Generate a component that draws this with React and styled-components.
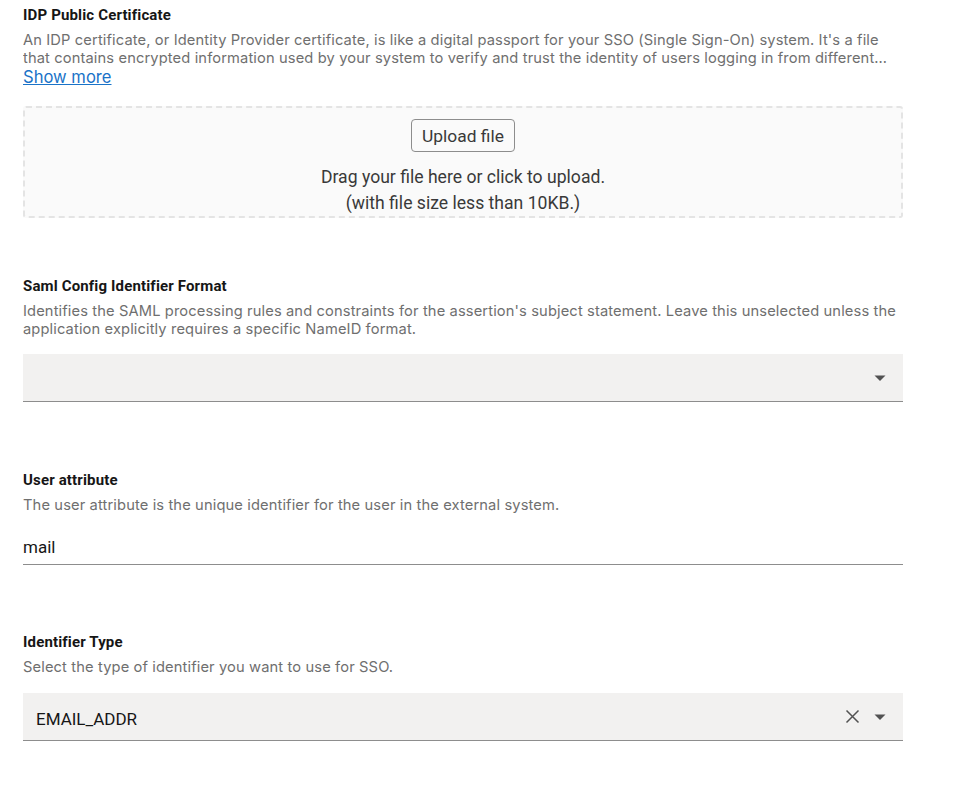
import React from "react";
import styled, { createGlobalStyle } from "styled-components";

const Global = createGlobalStyle`
  html, body { margin: 0; padding: 0; background: #ffffff; }
  body { font-family: Roboto, "Noto Sans", sans-serif; color: #161616; }
  * { box-sizing: border-box; }
`;

const Page = styled.div`
  width: 880px;
  margin-left: 23px;
  padding-top: 6px;
  display: flex;
  flex-direction: column;
`;

const Field = styled.section`
  display: flex;
  flex-direction: column;
  margin-bottom: ${(p) => p.$gap || 0}px;
`;

const Label = styled.div`
  font-family: Roboto, sans-serif;
  font-weight: 700;
  font-size: 15px;
  letter-spacing: 0.15px;
  line-height: 18px;
  color: #161616;
  margin-bottom: 7px;
`;

const Help = styled.div`
  font-family: Inter, "Noto Sans", sans-serif;
  font-size: 14.7px;
  line-height: 18px;
  color: #6f6f6f;
  letter-spacing: 0.12px;
`;

const Clamp = styled(Help)`
  display: -webkit-box;
  -webkit-line-clamp: 2;
  -webkit-box-orient: vertical;
  overflow: hidden;
`;

const MoreLink = styled.a`
  font-family: Inter, sans-serif;
  font-size: 16.6px;
  line-height: 20px;
  color: #1a73c8;
  text-decoration: underline;
  cursor: pointer;
  align-self: flex-start;
`;

const Drop = styled.div`
  margin-top: 19px;
  height: 112px;
  border: 2px dashed #e4e4e4;
  border-radius: 3px;
  background: #fafafa;
  display: flex;
  flex-direction: column;
  align-items: center;
  padding-top: 11px;
`;

const UploadButton = styled.button`
  height: 34px;
  padding: 0 10px;
  border: 1px solid #8d8d8d;
  border-radius: 4px;
  background: #fafafa;
  font-family: Roboto, sans-serif;
  font-size: 17.4px;
  color: #393939;
  cursor: pointer;
`;

const DropText = styled.div`
  margin-top: 12px;
  font-family: Roboto, sans-serif;
  font-size: 17.6px;
  line-height: 26px;
  color: #393939;
  text-align: center;
`;

const Select = styled.div`
  margin-top: ${(p) => p.$top}px;
  height: 48px;
  background: #f2f1f0;
  border-bottom: 1px solid #8d8d8d;
  display: flex;
  align-items: center;
  padding: 0 16px 0 13px;
  gap: 13px;
`;

const Value = styled.div`
  flex: 1;
  font-family: Roboto, sans-serif;
  font-size: 17px;
  color: #161616;
  padding-top: 5px;
`;

const Input = styled.div`
  margin-top: 21px;
  height: 30px;
  border-bottom: 1px solid #8d8d8d;
  font-family: Roboto, sans-serif;
  font-size: 17px;
  line-height: 24px;
  color: #161616;
`;

const Caret = () => (
  <svg width="14" height="8" viewBox="0 0 14 8">
    <path d="M1.5 1.5 L12.5 1.5 L7 7 Z" fill="#525252" />
  </svg>
);

const Clear = () => (
  <svg width="15" height="15" viewBox="0 0 15 15">
    <path d="M1.5 1.5 L13.5 13.5 M13.5 1.5 L1.5 13.5" stroke="#525252" strokeWidth="1.5" />
  </svg>
);

export default function App() {
  return (
    <>
      <Global />
      <Page>
        <Field $gap={59}>
          <Label>IDP Public Certificate</Label>
          <Clamp>
            An IDP certificate, or Identity Provider certificate, is like a digital passport for your SSO (Single Sign-On) system. It's a file that contains encrypted information used by your system to verify and trust the identity of users logging in from different sources, ensuring the sign-in is legitimate and secure.
          </Clamp>
          <MoreLink>Show more</MoreLink>
          <Drop>
            <UploadButton>Upload file</UploadButton>
            <DropText>
              Drag your file here or click to upload.
              <br />
              (with file size less than 10KB.)
            </DropText>
          </Drop>
        </Field>
        <Field $gap={69}>
          <Label>Saml Config Identifier Format</Label>
          <Help>
            Identifies the SAML processing rules and constraints for the assertion's subject statement. Leave this unselected unless the application explicitly requires a specific NameID format.
          </Help>
          <Select $top={16}>
            <Value />
            <Caret />
          </Select>
        </Field>
        <Field $gap={68}>
          <Label>User attribute</Label>
          <Help>The user attribute is the unique identifier for the user in the external system.</Help>
          <Input>mail</Input>
        </Field>
        <Field>
          <Label>Identifier Type</Label>
          <Help>Select the type of identifier you want to use for SSO.</Help>
          <Select $top={17}>
            <Value>EMAIL_ADDR</Value>
            <Clear />
            <Caret />
          </Select>
        </Field>
      </Page>
    </>
  );
}
